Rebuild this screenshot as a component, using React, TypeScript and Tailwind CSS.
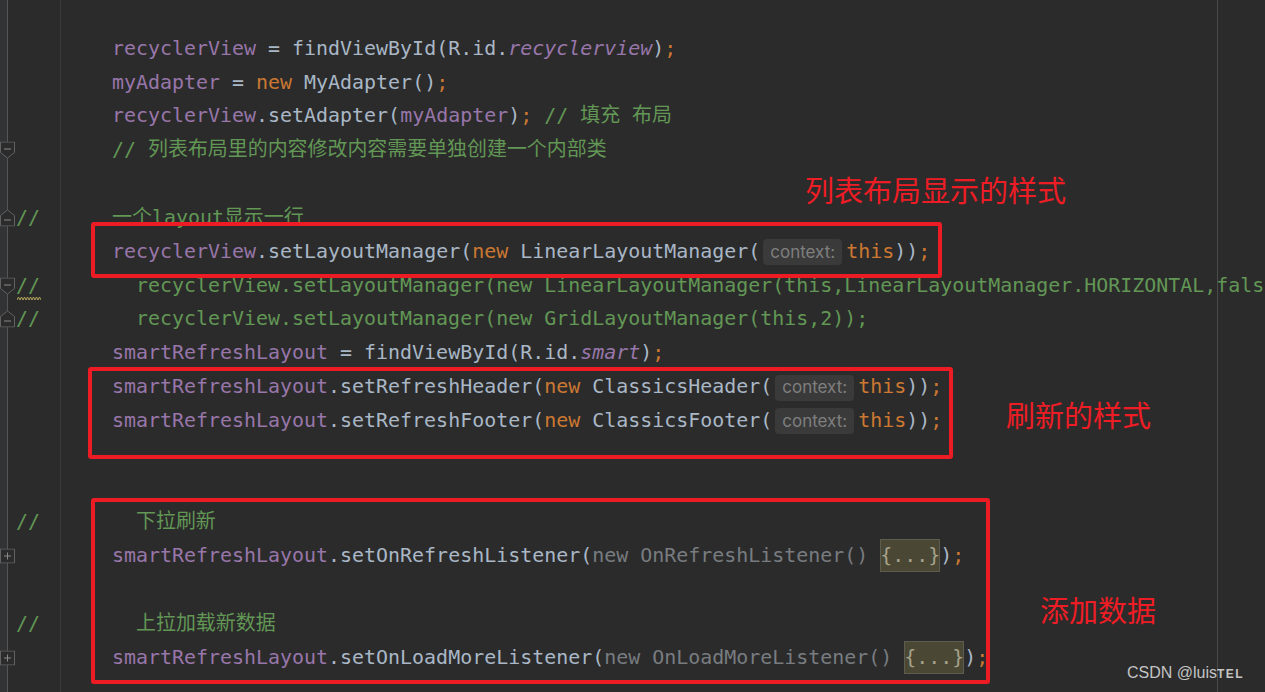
import React from "react";

const F = ({ children }: { children: React.ReactNode }) => <span className="text-[#9876aa]">{children}</span>;
const I = ({ children }: { children: React.ReactNode }) => <span className="italic text-[#9876aa]">{children}</span>;
const K = ({ children }: { children: React.ReactNode }) => <span className="text-[#cc7832]">{children}</span>;
const C = ({ children }: { children: React.ReactNode }) => <span className="text-[#629755]">{children}</span>;
const G = ({ children }: { children: React.ReactNode }) => <span className="text-[#787c80]">{children}</span>;

const Hint = () => (
  <span className="ml-[3px] mr-[4px] inline-flex h-[26px] w-[79px] items-center justify-center rounded-[4px] bg-[#3a3a3a] align-middle font-['Inter',sans-serif] text-[17px] leading-none text-[#7f7f7f]">
    context:
  </span>
);

const Fold = () => (
  <span className="inline-block h-[33px] bg-[#4a4835] align-top leading-[33px] text-[#a6a28c] shadow-[inset_0_0_0_1px_#5d5c4e]">
    {"{...}"}
  </span>
);

type MarkerKind = "down" | "up" | "plus";

const Marker = ({ kind }: { kind: MarkerKind }) => {
  if (kind === "down")
    return (
      <svg width="15" height="17" viewBox="0 0 15 17">
        <path d="M0.5 0.5 H14.5 V11 L7.5 16.5 L0.5 11 Z" fill="#2b2b2b" stroke="#626262" />
        <path d="M4 7.5 H11" stroke="#8a8a8a" />
      </svg>
    );
  if (kind === "up")
    return (
      <svg width="15" height="17" viewBox="0 0 15 17">
        <path d="M7.5 0.5 L14.5 6 V16.5 H0.5 V6 Z" fill="#2b2b2b" stroke="#626262" />
        <path d="M4 10.5 H11" stroke="#8a8a8a" />
      </svg>
    );
  return (
    <svg width="15" height="15" viewBox="0 0 15 15">
      <rect x="0.5" y="0.5" width="14" height="14" fill="#2b2b2b" stroke="#626262" />
      <path d="M4 7.5 H11 M7.5 4 V11" stroke="#8a8a8a" />
    </svg>
  );
};

const Row = ({
  marker,
  squiggle,
  children,
}: {
  marker?: MarkerKind;
  squiggle?: boolean;
  children?: React.ReactNode;
}) => (
  <div className="relative flex h-[33.83px] items-center">
    {marker && (
      <span className="absolute left-[-8px] top-1/2 flex -translate-y-1/2">
        <Marker kind={marker} />
      </span>
    )}
    {squiggle && (
      <svg className="absolute left-[9px] top-[27px]" width="24" height="5" viewBox="0 0 24 5">
        <path d="M0 4 L1.5 1 L3 4 L4.5 1 L6 4 L7.5 1 L9 4 L10.5 1 L12 4 L13.5 1 L15 4 L16.5 1 L18 4 L19.5 1 L21 4 L22.5 1 L24 4" fill="none" stroke="#b3a659" strokeWidth="1" />
      </svg>
    )}
    <span className="whitespace-pre pl-[8px] leading-[33.83px]">{children ?? " "}</span>
  </div>
);

const IND = "        ";

export default function App() {
  return (
    <div className="flex h-[692px] w-[1265px] overflow-hidden bg-[#2b2b2b] font-['DejaVu_Sans_Mono','Noto_Sans_CJK_SC',monospace] text-[19.95px] text-[#a9b7c6]">
      <div className="h-full w-[8px] flex-none border-r border-[#555555] bg-[#313335]" />
      <div className="relative flex-1">
        <div className="absolute inset-y-0 left-[52px] w-px bg-[#393939]" />
        <div className="absolute inset-y-0 left-[1209px] w-px bg-[#4b4b4b]" />
        <div className="relative mt-[-2px] flex flex-col">
          <Row />
          <Row>
            {IND}
            <F>recyclerView</F> = findViewById(R.id.<I>recyclerview</I>)<K>;</K>
          </Row>
          <Row>
            {IND}
            <F>myAdapter</F> = <K>new</K> MyAdapter()<K>;</K>
          </Row>
          <Row>
            {IND}
            <F>recyclerView</F>.setAdapter(<F>myAdapter</F>)<K>;</K> <C>// 填充 布局</C>
          </Row>
          <Row marker="down">
            {IND}
            <C>// 列表布局里的内容修改内容需要单独创建一个内部类</C>
          </Row>
          <Row />
          <Row marker="up">
            <C>{"//      一个layout显示一行"}</C>
          </Row>
          <Row>
            {IND}
            <F>recyclerView</F>.setLayoutManager(<K>new</K> LinearLayoutManager(
            <Hint />
            <K>this</K>))<K>;</K>
          </Row>
          <Row marker="down" squiggle>
            <C>{"//        recyclerView.setLayoutManager(new LinearLayoutManager(this,LinearLayoutManager.HORIZONTAL,false));"}</C>
          </Row>
          <Row marker="up">
            <C>{"//        recyclerView.setLayoutManager(new GridLayoutManager(this,2));"}</C>
          </Row>
          <Row>
            {IND}
            <F>smartRefreshLayout</F> = findViewById(R.id.<I>smart</I>)<K>;</K>
          </Row>
          <Row>
            {IND}
            <F>smartRefreshLayout</F>.setRefreshHeader(<K>new</K> ClassicsHeader(
            <Hint />
            <K>this</K>))<K>;</K>
          </Row>
          <Row>
            {IND}
            <F>smartRefreshLayout</F>.setRefreshFooter(<K>new</K> ClassicsFooter(
            <Hint />
            <K>this</K>))<K>;</K>
          </Row>
          <Row />
          <Row />
          <Row>
            <C>{"//        下拉刷新"}</C>
          </Row>
          <Row marker="plus">
            {IND}
            <F>smartRefreshLayout</F>.setOnRefreshListener(<G>{"new OnRefreshListener() "}</G>
            <Fold />)<K>;</K>
          </Row>
          <Row />
          <Row>
            <C>{"//        上拉加载新数据"}</C>
          </Row>
          <Row marker="plus">
            {IND}
            <F>smartRefreshLayout</F>.setOnLoadMoreListener(<G>{"new OnLoadMoreListener() "}</G>
            <Fold />)<K>;</K>
          </Row>
          <Row />
        </div>

        {/* annotations */}
        <div className="absolute left-[83px] top-[222px] h-[56px] w-[851px] rounded-[3px] border-[4px] border-[#ed1c24]" />
        <div className="absolute left-[80px] top-[367px] h-[92px] w-[865px] rounded-[3px] border-[4px] border-[#ed1c24]" />
        <div className="absolute left-[83px] top-[498px] h-[186px] w-[899px] rounded-[3px] border-[4px] border-[#ed1c24]" />

        <div className="absolute left-[797px] top-[174px] font-['Noto_Sans_CJK_SC',sans-serif] text-[29px] leading-[30px] text-[#ee1d25]">
          列表布局显示的样式
        </div>
        <div className="absolute left-[998px] top-[399px] font-['Noto_Sans_CJK_SC',sans-serif] text-[29px] leading-[30px] text-[#ee1d25]">
          刷新的样式
        </div>
        <div className="absolute left-[1032px] top-[594px] font-['Noto_Sans_CJK_SC',sans-serif] text-[29px] leading-[30px] text-[#ee1d25]">
          添加数据
        </div>

        <div className="absolute left-[1119px] top-[663px] whitespace-nowrap font-['Liberation_Sans',sans-serif] text-[16px] leading-[20px] text-[#c4c4c4]">
          CSDN @luis<span className="text-[12px] font-bold tracking-[1.5px]">TEL</span>
        </div>
      </div>
    </div>
  );
}
